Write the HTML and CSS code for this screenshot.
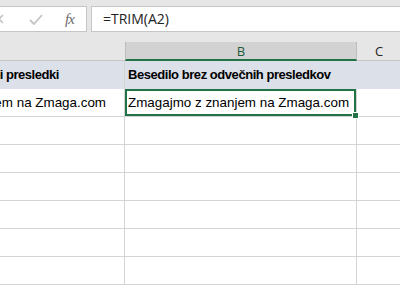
FILE: index.html
```html
<!DOCTYPE html>
<html lang="en">
<head>
    <meta charset="UTF-8">
    <title>TRIM</title>
    <link rel="stylesheet" href="styles.css">
</head>
<body>
    <div class="formula-bar">
        <div class="buttons">
            <svg class="icon cancel" width="10" height="10" viewBox="0 0 10 10"><path d="M1 1 L9 9 M9 1 L1 9" stroke="#c4c4c4" stroke-width="1.6" fill="none"/></svg>
            <svg class="icon enter" width="14" height="11" viewBox="0 0 14 11"><path d="M1 6 L5 10 L13 1" stroke="#c4c4c4" stroke-width="1.8" fill="none"/></svg>
            <span class="fx">fx</span>
        </div>
        <div class="formula">=TRIM(A2)</div>
    </div>
    <div class="sheet">
        <div class="col-head a"></div>
        <div class="col-head b">B</div>
        <div class="col-head c">C</div>

        <div class="cell a title"><span>Besedilo z odvečnimi presledki</span></div>
        <div class="cell b title">Besedilo brez odvečnih presledkov</div>
        <div class="cell c title"></div>

        <div class="cell a data"><span>Zmagajmo    z    znanjem na Zmaga.com</span></div>
        <div class="cell b data active">Zmagajmo z znanjem na Zmaga.com<i class="handle"></i></div>
        <div class="cell c"></div>

        <div class="cell a"></div><div class="cell b"></div><div class="cell c"></div>
        <div class="cell a"></div><div class="cell b"></div><div class="cell c"></div>
        <div class="cell a"></div><div class="cell b"></div><div class="cell c"></div>
        <div class="cell a"></div><div class="cell b"></div><div class="cell c"></div>
        <div class="cell a"></div><div class="cell b"></div><div class="cell c"></div>
        <div class="cell a"></div><div class="cell b"></div><div class="cell c"></div>
    </div>
</body>
</html>
```

FILE: styles.css
```css
body {
    margin: 0;
    width: 400px;
    height: 300px;
    overflow: hidden;
    background: #fff;
    font-family: "Open Sans", "Liberation Sans", sans-serif;
}
.formula-bar {
    background: #e6e6e6;
    padding: 6px 0 10px 0;
    display: flex;
    gap: 4px;
}
.buttons {
    width: 90px;
    margin-left: -4px;
    height: 24px;
    background: #fff;
    border: 1px solid #c6c6c6;
    border-left: none;
    display: flex;
    align-items: center;
}
.cancel {
    margin-left: -2px;
}
.enter {
    margin-left: 25px;
}
.fx {
    margin-left: 22px;
    font-family: "Liberation Serif", serif;
    font-style: italic;
    font-size: 15px;
    color: #6a6a6a;
    letter-spacing: -1px;
}
.formula {
    flex: 1;
    height: 24px;
    background: #fff;
    border: 1px solid #c6c6c6;
    border-right: none;
    font-family: "Open Sans", sans-serif;
    font-size: 14px;
    line-height: 24px;
    padding-left: 11px;
    color: #222;
}
.sheet {
    display: grid;
    grid-template-columns: 125px 232px 60px;
    grid-template-rows: 19px 28px 28px repeat(6, 28px);
    background: #fff;
}
.col-head {
    background: #e6e6e6;
    border-bottom: 1px solid #c6c6c6;
    font-size: 13px;
    line-height: 18px;
    text-align: center;
    color: #222;
}
.col-head.b {
    background: #d2d2d2;
    border-left: 1px solid #bdbdbd;
    border-right: 1px solid #bdbdbd;
    border-bottom: 2px solid #217346;
    color: #1e5a3a;
}
.col-head.c {
    padding-right: 16px;
}
.cell {
    border-right: 1px solid #d4d4d4;
    border-bottom: 1px solid #d4d4d4;
    font-family: "Liberation Sans", sans-serif;
    font-size: 13.4px;
    line-height: 27px;
    padding-left: 3px;
    white-space: nowrap;
    overflow: hidden;
    color: #000;
}
.cell.c {
    border-right: none;
}
.cell.title {
    background: #dce0e8;
    font-weight: bold;
    font-size: 13px;
    letter-spacing: -0.45px;
    border-color: #dce0e8;
}
.cell.a.title {
    border-right-color: #d4d4d4;
}
.cell.a {
    display: flex;
    justify-content: flex-end;
    padding-left: 0;
}
.cell.a.title {
    padding-right: 65px;
}
.cell.a.data {
    padding-right: 18px;
}
.cell.a span {
    white-space: pre;
}
.cell.active {
    position: relative;
    overflow: visible;
    box-shadow: inset 0 0 0 2px #217346;
    padding-left: 3px;
}
.handle {
    position: absolute;
    right: -3px;
    bottom: -3px;
    width: 5px;
    height: 5px;
    background: #217346;
    border: 1px solid #fff;
}
```
